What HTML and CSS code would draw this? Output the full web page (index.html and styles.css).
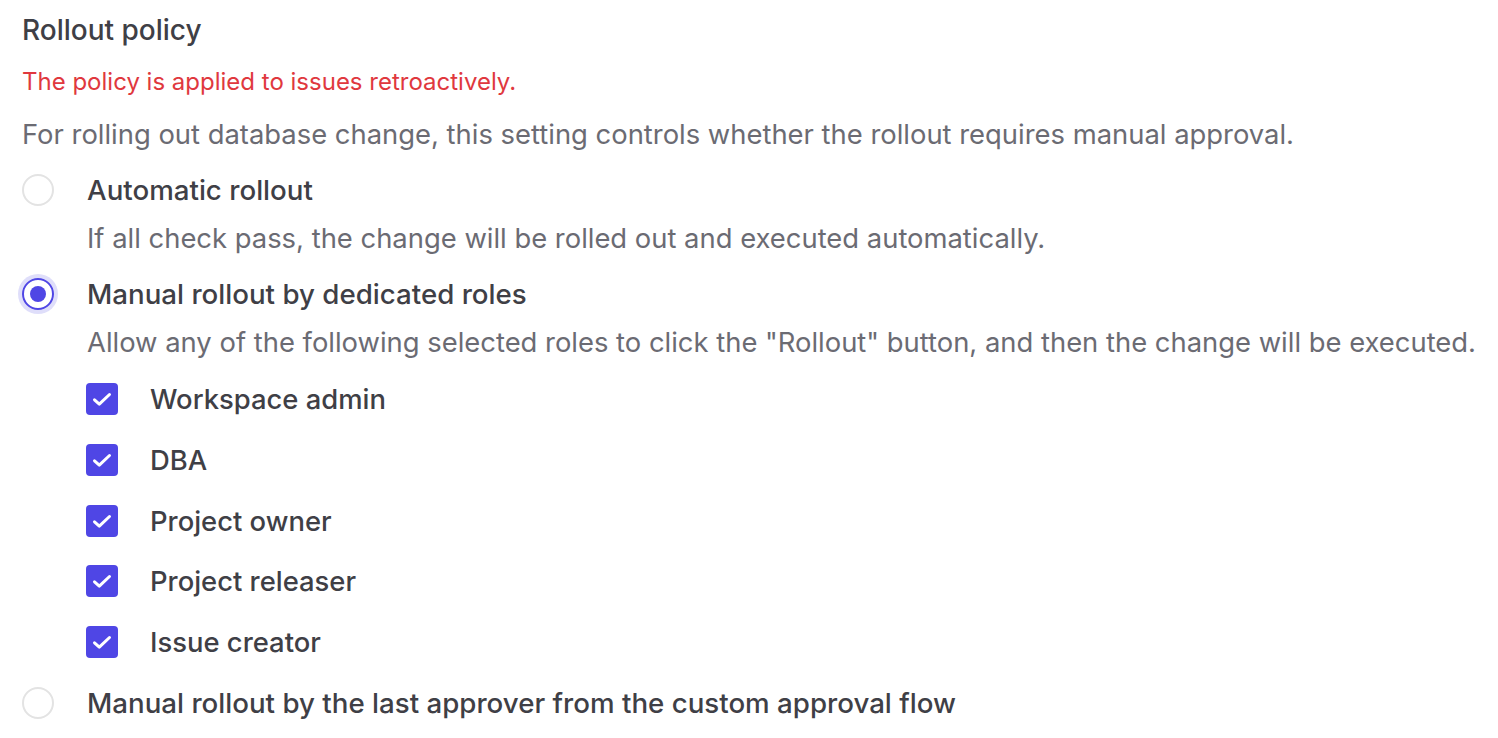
FILE: index.html
```html
<!doctype html>
<html lang="en">
<head>
    <meta charset="UTF-8">
    <link rel="stylesheet" href="styles.css">
    <title>Rollout policy</title>
</head>
<body>
<div class="setting">
    <div class="title">Rollout policy</div>
    <div class="warning">The policy is applied to issues retroactively.</div>
    <div class="desc">For rolling out database change, this setting controls whether the rollout requires manual approval.</div>

    <div class="options">
        <div class="option">
            <span class="radio"></span>
            <div class="option-body">
                <div class="option-label">Automatic rollout</div>
                <div class="desc">If all check pass, the change will be rolled out and executed automatically.</div>
            </div>
        </div>

        <div class="option">
            <span class="radio checked"></span>
            <div class="option-body">
                <div class="option-label">Manual rollout by dedicated roles</div>
                <div class="desc">Allow any of the following selected roles to click the "Rollout" button, and then the change will be executed.</div>
                <div class="roles">
                    <div class="role"><span class="checkbox"><svg viewBox="0 0 32 32"><path d="M8.5 16.8l4.8 4.4L23.5 11.5"/></svg></span>Workspace admin</div>
                    <div class="role"><span class="checkbox"><svg viewBox="0 0 32 32"><path d="M8.5 16.8l4.8 4.4L23.5 11.5"/></svg></span>DBA</div>
                    <div class="role"><span class="checkbox"><svg viewBox="0 0 32 32"><path d="M8.5 16.8l4.8 4.4L23.5 11.5"/></svg></span>Project owner</div>
                    <div class="role"><span class="checkbox"><svg viewBox="0 0 32 32"><path d="M8.5 16.8l4.8 4.4L23.5 11.5"/></svg></span>Project releaser</div>
                    <div class="role"><span class="checkbox"><svg viewBox="0 0 32 32"><path d="M8.5 16.8l4.8 4.4L23.5 11.5"/></svg></span>Issue creator</div>
                </div>
            </div>
        </div>

        <div class="option">
            <span class="radio"></span>
            <div class="option-body">
                <div class="option-label">Manual rollout by the last approver from the custom approval flow</div>
            </div>
        </div>
    </div>
</div>
</body>
</html>
```

FILE: styles.css
```css
body {
    margin: 0;
    background: #fff;
    font-family: Inter, "Noto Sans", sans-serif;
}

.setting {
    padding: 10px 22px 0;
    display: flex;
    flex-direction: column;
    gap: 12px;
}

.title {
    font-size: 28px;
    line-height: 40px;
    font-weight: 500;
    color: #3f3f46;
}

.warning {
    font-size: 24px;
    line-height: 40px;
    color: #e0383e;
}

.desc {
    font-size: 27.4px;
    line-height: 40px;
    color: #6b6b73;
}

.options {
    display: flex;
    flex-direction: column;
    gap: 16px;
    margin-top: 4px;
}

.option {
    display: flex;
    align-items: flex-start;
    gap: 33px;
}

.option-body {
    display: flex;
    flex-direction: column;
    gap: 8px;
}

.option-label {
    font-size: 27.7px;
    line-height: 40px;
    font-weight: 500;
    color: #3f3f46;
}

.radio {
    flex: none;
    box-sizing: border-box;
    width: 32px;
    height: 32px;
    margin-top: 4px;
    border: 2px solid #e3e3e3;
    border-radius: 50%;
}

.radio.checked {
    border-color: #4f46e5;
    box-shadow: 0 0 0 4px rgba(79, 70, 229, 0.18);
    display: flex;
    align-items: center;
    justify-content: center;
}

.radio.checked::after {
    content: "";
    width: 16px;
    height: 16px;
    border-radius: 50%;
    background: #4f46e5;
}

.roles {
    display: flex;
    flex-direction: column;
    gap: 20.75px;
    margin: 9px 0 5px;
}

.role {
    display: flex;
    align-items: center;
    gap: 32px;
    margin-left: -1px;
    font-size: 27.4px;
    line-height: 40px;
    font-weight: 500;
    color: #3f3f46;
}

.checkbox {
    flex: none;
    width: 32px;
    height: 32px;
    border-radius: 4px;
    background: #4f46e5;
}

.checkbox svg {
    display: block;
    width: 32px;
    height: 32px;
    fill: none;
    stroke: #fff;
    stroke-width: 3;
    stroke-linecap: round;
    stroke-linejoin: round;
}
```
